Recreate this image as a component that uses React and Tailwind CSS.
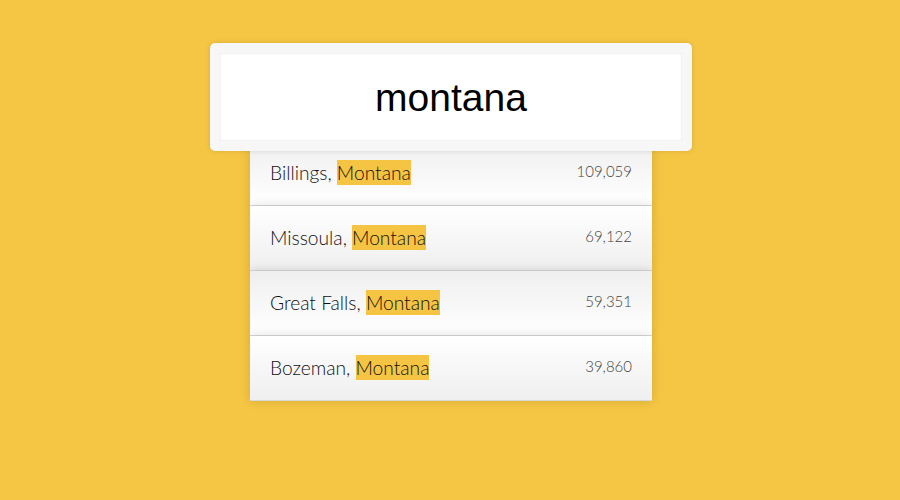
const cities = [
  { name: "Billings", population: "109,059" },
  { name: "Missoula", population: "69,122" },
  { name: "Great Falls", population: "59,351" },
  { name: "Bozeman", population: "39,860" },
];

export default function App() {
  return (
    <div className="min-h-[500px] bg-[#f5c643] pl-[2px] pt-[43px] font-['Liberation_Sans',Arial,sans-serif]">
      <div className="flex flex-col items-center">
        <input
          type="text"
          readOnly
          value="montana"
          className="relative z-10 h-[108px] w-[482px] rounded-[5px] border-[10px] border-[#f7f7f7] bg-white px-5 pt-[2px] text-center text-[39px] text-black shadow-[0_0_5px_rgba(0,0,0,0.12),inset_0_0_2px_rgba(0,0,0,0.19)] outline-none"
        />
        <ul className="-mt-[10px] w-[402px]">
          {cities.map((city, i) => (
            <li
              key={city.name}
              className={`flex justify-between border-b border-[#d8d8d8] px-5 py-5 font-['Lato',sans-serif] font-light shadow-[0_0_10px_rgba(0,0,0,0.14)] ${
                i % 2 === 0 ? "bg-gradient-to-b from-[#efefef] to-white" : "bg-gradient-to-b from-white to-[#efefef]"
              }`}
            >
              <span className="text-[19.2px] leading-6 text-[#111]">
                {city.name}, <span className="bg-[#f6c443] py-[1px]">Montana</span>
              </span>
              <span className="text-[15px] leading-5 text-[#444]">{city.population}</span>
            </li>
          ))}
        </ul>
      </div>
    </div>
  );
}
